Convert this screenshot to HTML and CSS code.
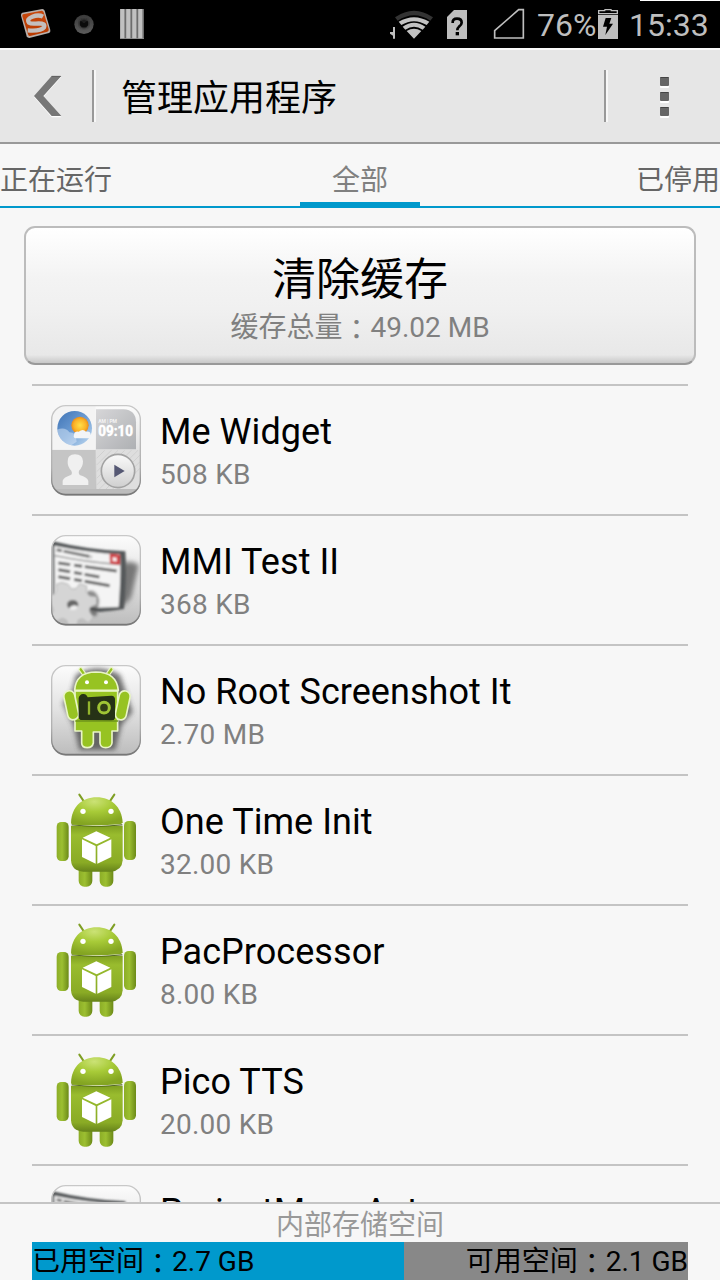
FILE: index.html
```html
<!DOCTYPE html>
<html lang="zh-CN">
<head>
<meta charset="utf-8">
<title>管理应用程序</title>
<link rel="stylesheet" href="styles.css">
</head>
<body>
<svg class="defs" width="0" height="0" aria-hidden="true">
  <defs>
    <linearGradient id="plate" x1="0" y1="0" x2="0" y2="1"><stop offset="0" stop-color="#fcfcfc"/><stop offset=".5" stop-color="#e2e2e2"/><stop offset="1" stop-color="#bdbdbd"/></linearGradient>
    <linearGradient id="edge" x1="0" y1="0" x2="0" y2="1"><stop offset="0" stop-color="#c8c8c8"/><stop offset=".7" stop-color="#b0b0b0"/><stop offset="1" stop-color="#777"/></linearGradient>
    <linearGradient id="limb" x1="0" y1="0" x2="1" y2="0"><stop offset="0" stop-color="#8cad27"/><stop offset=".45" stop-color="#9cbf31"/><stop offset="1" stop-color="#6c8a18"/></linearGradient>
    <linearGradient id="torso" x1="0" y1="0" x2="0" y2="1"><stop offset="0" stop-color="#7f9f20"/><stop offset=".2" stop-color="#99bc2e"/><stop offset=".8" stop-color="#8aab25"/><stop offset="1" stop-color="#66831a"/></linearGradient>
    <radialGradient id="head" cx=".45" cy=".15" r=".8"><stop offset="0" stop-color="#cbe276"/><stop offset=".45" stop-color="#a8cb38"/><stop offset="1" stop-color="#84a522"/></radialGradient>
    <linearGradient id="sky" x1="0" y1="0" x2="1" y2="1"><stop offset="0" stop-color="#3f73b5"/><stop offset=".5" stop-color="#6c9cd3"/><stop offset="1" stop-color="#c3dcf2"/></linearGradient>
    <radialGradient id="sun"><stop offset="0" stop-color="#ffe04a"/><stop offset=".7" stop-color="#fbb328"/><stop offset="1" stop-color="#e98c1c"/></radialGradient>
    <linearGradient id="shine" x1="0" y1="0" x2="1" y2="1"><stop offset="0" stop-color="#d6d6d8"/><stop offset="1" stop-color="#aeb0b3"/></linearGradient>
    <linearGradient id="play" x1="0" y1="0" x2="0" y2="1"><stop offset="0" stop-color="#fafafa"/><stop offset="1" stop-color="#cfcfcf"/></linearGradient>
    <linearGradient id="orange" x1="0" y1="0" x2="0" y2="1"><stop offset="0" stop-color="#c9480c"/><stop offset="1" stop-color="#b83a00"/></linearGradient>
    <linearGradient id="orb" x1="0" y1="0" x2="0" y2="1"><stop offset="0" stop-color="#3a3a3a"/><stop offset="1" stop-color="#5c5c5c"/></linearGradient>
    <filter id="soft1" x="-10%" y="-10%" width="120%" height="120%"><feGaussianBlur stdDeviation="1.5"/></filter>
    <filter id="soft2" x="-10%" y="-10%" width="120%" height="120%"><feGaussianBlur stdDeviation="2.6"/></filter>
    <filter id="soft3" x="-20%" y="-20%" width="140%" height="140%"><feGaussianBlur stdDeviation="4"/></filter>
    <filter id="soft7" x="-30%" y="-30%" width="160%" height="160%"><feGaussianBlur stdDeviation="8"/></filter>
    <clipPath id="tile"><rect x="35" y="31" width="266" height="266" rx="42"/></clipPath>
    <clipPath id="weather"><circle cx="104" cy="100" r="52"/></clipPath>

    <g id="robot">
      <g stroke="#7f9f24" stroke-width="6" stroke-linecap="round"><path d="M118 29l16 24M223 29l-16 24"/></g>
      <rect x="116" y="235" width="41" height="70" rx="17" fill="url(#limb)"/>
      <rect x="179" y="235" width="41" height="70" rx="17" fill="url(#limb)"/>
      <rect x="50" y="111" width="36" height="117" rx="14" fill="url(#limb)"/>
      <rect x="252" y="108" width="36" height="117" rx="14" fill="url(#limb)"/>
      <path d="M93 122H248V226Q246 258 212 260H130Q95 258 93 226Z" fill="url(#torso)"/>
      <path d="M95 118Q170 129 247 118V121Q170 129 95 121Z" fill="#3f5510"/>
      <path d="M93 114C94 66 126 37 170 37S245 66 248 112Q247 117 240 118Q170 123 99 119Q93 118 93 114Z" fill="url(#head)"/>
      <circle cx="129" cy="79" r="8" fill="#fff"/><circle cx="213" cy="79" r="8" fill="#fff"/>
      <path d="M169 139L211 158L170 178L128 158ZM126 163L167 183V236L126 216ZM214 163L172 183V236L214 216Z" fill="#fff"/>
    </g>

    <g id="mmi">
      <rect x="35" y="35" width="266" height="267" rx="42" fill="#888" filter="url(#soft1)"/>
      <rect x="35" y="31" width="266" height="266" rx="42" fill="url(#plate)"/>
      <g clip-path="url(#tile)">
        <path d="M250 112Q285 107 296 122L274 215Q260 245 200 252Z" fill="#777" filter="url(#soft7)"/>
        <g filter="url(#soft2)">
          <path d="M36 48Q140 74 256 79Q261 145 252 252L180 261L40 230Z" fill="#55585a"/>
          <path d="M43 62Q140 82 240 88Q244 140 236 246L170 248L45 225Z" fill="#f4f4f4"/>
          <path d="M45 92Q130 110 239 119" fill="none" stroke="#888" stroke-width="4"/>
          <path d="M50 74L155 96" stroke="#777" stroke-width="9" stroke-dasharray="16 5 80 4"/>
          <path d="M55 114L230 138M55 134L178 156M55 155L209 182" stroke="#666" stroke-width="9" stroke-dasharray="36 12 24 8 100 0"/>
          <path d="M209 86L240 89V120L210 116Z" fill="#cf343b"/>
          <path d="M218 97l12 12M230 98l-12 10" stroke="#fff" stroke-width="5"/>
        </g>
        <path d="M140 200Q168 188 177 226L170 272L132 275Z" fill="#444" opacity=".6" filter="url(#soft3)"/>
        <g filter="url(#soft2)">
          <path d="M84 178L94 192L109 191L119 176L140 183L139 203L149 213L170 216V238L151 246L148 258L160 278L145 294L127 281L115 285L110 310H86L80 286L67 280L45 291L28 276L40 258L37 245L20 235V212L44 207L50 196L47 179L65 172Z" fill="#d5d5d5" stroke="#b4b4b4" stroke-width="3"/>
          <ellipse cx="98" cy="239" rx="17" ry="14" fill="#666"/><path d="M88 249Q99 235 114 245Q107 259 91 254Z" fill="#eee"/>
        </g>
      </g>
      <rect x="35" y="32" width="266" height="266" rx="42" fill="none" stroke="url(#edge)" stroke-width="4"/>
    </g>
  </defs>
</svg>

<div class="screen">
  <div class="status">
    <div class="notices">
      <svg class="status-art" width="160" height="48" viewBox="0 0 480 144">
        <path d="M67 38L127 27Q132 27 134 32L151 90Q152 97 147 99L88 114Q82 114 80 109L63 47Q62 40 67 38Z" fill="#b8b0ac"/>
        <path d="M69 43L125 32Q129 32 131 37L146 88Q147 94 142 95L90 108Q85 109 84 103L67 49Q66 44 69 43Z" fill="url(#orange)"/>
        <path d="M129 50Q116 43 97 50Q79 57 87 68Q94 73 116 70Q137 70 132 82Q123 94 83 91" fill="none" stroke="#c4bfbd" stroke-width="13"/>
        <circle cx="252" cy="73" r="29" fill="url(#orb)"/><circle cx="252" cy="71" r="14" fill="#1c1c1c" filter="url(#soft2)"/><path d="M240 64h6l3 5h6l3-5h6v12l-6 6h-12l-6-6z" fill="#0b0b0b"/>
        <path d="M360 27h72v90h-72z" fill="#858585"/>
        <path d="M361 27h12v88h-12zM379 27h12v88h-12zM397 27h12v88h-12zM415 27h12v88h-12z" fill="#c0c0c0"/>
        <path d="M376 27v87M394 27v87M412 27v87M430 27v87" stroke="#686868" stroke-width="3"/>
      </svg>
    </div>
    <svg class="signals" width="152" height="48" viewBox="0 0 456 144">
      <path d="M45 81v35H39V107L30 101V96H39V81Z" fill="#bebebe"/>
      <path d="M45 52Q102 13 159 52L151 62Q102 29 53 62Z" fill="#333"/>
      <path d="M56 65Q102 38 148 65L140 75Q102 52 64 75ZM68 80Q102 57 136 80L128 89Q102 71 76 89ZM80 93Q102 79 124 93L102 116Z" fill="#c2c2c2"/>
      <path d="M222 30H261V117H201V51Z" fill="#bebebe"/>
      <path d="M218 69Q217 56 231 56Q245 56 245 68Q245 74 237 80Q232 84 232 91" fill="none" stroke="#000" stroke-width="8"/><path d="M227 96h10v10h-10z"/>
      <path d="M344 114V92L416 29H430V114Z" fill="none" stroke="#bebebe" stroke-width="5"/>
    </svg>
    <span class="percent">76%</span>
    <svg class="battery" width="20" height="48" viewBox="0 0 60 144">
      <path d="M0 30H19V27H41V30H60V117H0Z" fill="#bebebe"/><path d="M4 34H22V31H38V34H56V39H4ZM0 43H60V45H0Z" fill="#000"/>
      <path d="M23 54H40L34 71H45L22 105L27 80H15Z" fill="#000"/>
    </svg>
    <span class="clock">15:33</span>
    <i class="corner-line"></i>
  </div>

  <header class="bar">
    <svg class="back" width="92" height="92" viewBox="0 0 276 276">
      <path d="M155 81H184L130 141L184 202H155L102 141Z" fill="#fff"/>
      <path d="M155 78H184L130 138L184 198H155L102 138Z" fill="#777"/><path d="M155 79H182" stroke="#555" stroke-width="2"/>
    </svg>
    <i class="rule"></i>
    <h1 class="title">管理应用程序</h1>
    <i class="rule"></i>
    <div class="menu"><i class="dot"></i><i class="dot"></i><i class="dot"></i></div>
  </header>

  <nav class="tabs">
    <span class="tab">正在运行</span>
    <span class="tab tab-current">全部</span>
    <span class="tab tab-last">已停用</span>
  </nav>

  <main class="content">
    <button class="clear">
      <span class="clear-title">清除缓存</span>
      <span class="clear-total">缓存总量<span class="colon" lang="zh-Hant">：</span>49.02 MB</span>
    </button>

    <ul class="apps">
      <li class="app">
        <svg class="icon" viewBox="0 0 330 330">
          <rect x="35" y="35" width="266" height="267" rx="42" fill="#888" filter="url(#soft1)"/>
          <rect x="35" y="31" width="266" height="266" rx="42" fill="url(#plate)"/>
          <g clip-path="url(#tile)">
            <path d="M35 31H167V164H35Z" fill="#f4f4f4"/>
            <path d="M168 43H250Q288 45 288 82V163H168Z" fill="url(#shine)"/>
            <path d="M35 165H167V285H35Z" fill="#c5c5c5"/>
            <path d="M169 165H301V300H169Z" fill="#dedede"/>
            <path d="M170 190l24-24M170 210l44-44M170 230l64-64M170 250l84-84M170 270l104-104M170 290l124-124M190 290l110-110M210 290l90-90M230 290l70-70" stroke="#d0d0d0" stroke-width="3"/>
            <path d="M35 282H301V300H35Z" fill="#bcbcbc"/>
          </g>
          <circle cx="104" cy="100" r="52" fill="url(#sky)"/>
          <g clip-path="url(#weather)" filter="url(#soft1)"><path d="M50 105Q75 94 88 112Q110 112 110 140L80 160H45Z" fill="#dceafa" opacity=".5"/></g>
          <circle cx="120" cy="91" r="26" fill="url(#sun)" filter="url(#soft1)"/>
          <path d="M102 121Q102 108 116 110Q129 100 138 110Q151 107 152 119Q164 119 160 130H107Q99 128 102 121Z" fill="#f3f5f7" filter="url(#soft1)"/>
          <text class="art-small" x="175" y="84" textLength="56">AM | PM</text>
          <text class="art-clock" x="175" y="123" textLength="104" lengthAdjust="spacingAndGlyphs">09:10</text>
          <path d="M68 270V257Q70 247 94 239Q98 235 94 227Q82 216 83 199Q82 179 105 178Q128 178 129 199Q129 216 117 227Q114 236 119 240Q143 247 145 258V270Z" fill="#f0f0f0" filter="url(#soft1)"/>
          <circle cx="234" cy="228" r="50" fill="url(#play)" stroke="#a3a3a3" stroke-width="5"/>
          <path d="M223 209L254 228L223 247Z" fill="#555873"/>
          <rect x="35" y="32" width="266" height="266" rx="42" fill="none" stroke="url(#edge)" stroke-width="4"/>
        </svg>
        <div class="info"><span class="name">Me Widget</span><span class="size">508 KB</span></div>
      </li>
      <li class="app">
        <svg class="icon" viewBox="0 0 330 330"><use href="#mmi"/></svg>
        <div class="info"><span class="name">MMI Test II</span><span class="size">368 KB</span></div>
      </li>
      <li class="app">
        <svg class="icon" viewBox="0 0 330 330">
          <rect x="35" y="35" width="266" height="267" rx="42" fill="#888" filter="url(#soft1)"/>
          <rect x="35" y="31" width="266" height="266" rx="42" fill="url(#plate)"/>
          <path d="M108 60Q170 20 240 60L278 170L245 210L225 285H118L100 210L68 145L95 110Z" fill="#444" opacity=".75" filter="url(#soft7)"/>
          <g fill="#97c321" stroke="#e9f5c6" stroke-width="5" stroke-linejoin="round" filter="url(#soft1)">
            <path d="M122 43L134 60M214 43L202 60" stroke-width="14" stroke-linecap="round"/>
            <path d="M122 43L134 60M214 43L202 60" stroke="#97c321" stroke-width="7" stroke-linecap="round"/>
            <path d="M105 108H233V228H216V264Q214 278 197 278Q181 278 180 264V231H160V264Q157 278 142 278Q125 278 125 264V228H105Z"/>
            <path d="M104 106Q107 52 168 51Q230 52 235 106Z"/>
            <rect x="77" y="107" width="33" height="88" rx="16" transform="rotate(-12 93 150)"/>
            <rect x="232" y="107" width="33" height="88" rx="16" transform="rotate(12 248 150)"/>
          </g>
          <circle cx="141" cy="82" r="6" fill="#fff"/><circle cx="198" cy="82" r="6" fill="#fff"/>
          <g filter="url(#soft1)">
            <path d="M116 129Q119 118 129 117Q139 116 143 127L215 122Q224 123 225 132V190Q223 197 214 197L122 195Q116 193 116 185Z" fill="#263013"/>
            <path d="M147 139V179" stroke="#93b52d" stroke-width="7"/><circle cx="192" cy="158" r="16" fill="#323e18" stroke="#a0c435" stroke-width="9"/>
            <path d="M106 198H234" stroke="#6f941c" stroke-width="5"/>
          </g>
          <rect x="35" y="32" width="266" height="266" rx="42" fill="none" stroke="url(#edge)" stroke-width="4"/>
        </svg>
        <div class="info"><span class="name">No Root Screenshot It</span><span class="size">2.70 MB</span></div>
      </li>
      <li class="app">
        <svg class="icon" viewBox="0 0 330 330"><use href="#robot"/></svg>
        <div class="info"><span class="name">One Time Init</span><span class="size">32.00 KB</span></div>
      </li>
      <li class="app">
        <svg class="icon" viewBox="0 0 330 330"><use href="#robot"/></svg>
        <div class="info"><span class="name">PacProcessor</span><span class="size">8.00 KB</span></div>
      </li>
      <li class="app">
        <svg class="icon" viewBox="0 0 330 330"><use href="#robot"/></svg>
        <div class="info"><span class="name">Pico TTS</span><span class="size">20.00 KB</span></div>
      </li>
      <li class="app">
        <svg class="icon" viewBox="0 0 330 330"><use href="#mmi"/></svg>
        <div class="info"><span class="name">ProjectMenuAct</span></div>
      </li>
    </ul>
  </main>

  <footer class="storage">
    <div class="storage-title">内部存储空间</div>
    <div class="meter">
      <div class="used">已用空间<span class="colon" lang="zh-Hant">：</span>2.7 GB</div>
      <div class="free">可用空间<span class="colon" lang="zh-Hant">：</span>2.1 GB</div>
    </div>
  </footer>
</div>
</body>
</html>
```
FILE: styles.css
```css
* { box-sizing: border-box; }

body {
  margin: 0;
  background: #f7f7f7;
  color: #000;
  font-family: Roboto, "Noto Sans CJK SC", sans-serif;
}

.defs { position: absolute; }

.screen {
  display: flex;
  flex-direction: column;
  width: 720px;
  height: 1280px;
  overflow: hidden;
}

.colon {
  font-family: "Noto Sans CJK TC", sans-serif;
  line-height: 20px;
  vertical-align: -3px;
}

/* Status bar */
.status {
  position: relative;
  display: flex;
  flex: none;
  height: 48px;
  background: #000;
  color: #bebebe;
  font-size: 32px;
  line-height: 50px;
}
.status svg { display: block; }
.notices { width: 380px; }
.percent { width: 66px; padding-left: 5px; white-space: nowrap; }
.battery { flex: none; }
.clock { padding-left: 11px; }
.corner-line {
  position: absolute;
  top: 0;
  right: 0;
  width: 80px;
  height: 1px;
  background: #fff;
}

/* Action bar */
.bar {
  display: flex;
  flex: none;
  align-items: center;
  height: 96px;
  border-top: 2px solid #fafafa;
  border-bottom: 2px solid #999;
  background: #e6e6e6;
}
.back { display: block; flex: none; }
.rule {
  width: 4px;
  height: 52px;
  border-left: 2px solid #999;
  border-right: 2px solid #f7f7f7;
}
.title {
  flex: 1;
  margin: 0;
  padding: 6px 0 0 25px;
  font-size: 36px;
  font-weight: 400;
  line-height: 52px;
}
.menu {
  display: flex;
  flex-direction: column;
  align-items: center;
  gap: 6px;
  width: 112px;
}
.dot {
  width: 9px;
  height: 9px;
  border-top: 1px solid #444;
  border-radius: 1px;
  background: #666;
  box-shadow: 0 2px #fff;
}

/* Tabs */
.tabs {
  display: flex;
  flex: none;
  justify-content: space-between;
  height: 64px;
  border-bottom: 2px solid #0099cc;
  color: #666;
  font-size: 28px;
  line-height: 73px;
}
.tab { width: 300px; height: 62px; }
.tab-current {
  width: 120px;
  border-bottom: 4px solid #0099cc;
  color: #808080;
  text-align: center;
}
.tab-last { text-align: right; }

/* App list */
.content {
  flex: 1;
  min-height: 0;
  padding-top: 18px;
  overflow: hidden;
}
.clear {
  display: flex;
  flex-direction: column;
  align-items: center;
  width: 672px;
  height: 139px;
  margin: 0 24px 19px;
  padding: 21px 0 0;
  border: 2px solid #bcbcbc;
  border-bottom-color: #999;
  border-radius: 11px;
  background: linear-gradient(#fff, #f3f3f3 38%, #f0f0f0 60%, #e8e8e8 94%, #c8c8c8);
  color: #000;
  font-family: inherit;
}
.clear-title { font-size: 44px; line-height: 62px; }
.clear-total {
  color: #808080;
  font-size: 28px;
  line-height: 34px;
}

.apps {
  margin: 0 32px;
  padding: 0;
  list-style: none;
}
.app {
  display: flex;
  height: 130px;
  padding: 9px 0 0 8px;
  border-top: 2px solid #c4c4c4;
}
.icon { display: block; flex: none; width: 110px; height: 110px; }
.info {
  display: flex;
  flex-direction: column;
  padding: 16px 0 0 10px;
}
.name {
  font-size: 36px;
  line-height: 42px;
  letter-spacing: 0.05px;
  white-space: nowrap;
}
.size {
  margin-top: 5px;
  color: #808080;
  font-size: 28px;
  line-height: 33px;
  letter-spacing: 0.25px;
}

.art-small { fill: #f4f4f4; font: 700 15px Roboto, sans-serif; }
.art-clock {
  fill: #fff;
  stroke: #fff;
  stroke-width: 1.5px;
  font: 700 43px Roboto, sans-serif;
}

/* Storage footer */
.storage {
  flex: none;
  height: 78px;
  border-top: 2px solid #c4c4c4;
  background: #f7f7f7;
}
.storage-title {
  height: 38px;
  color: #999;
  font-size: 28px;
  line-height: 43px;
  text-align: center;
}
.meter {
  display: flex;
  height: 38px;
  margin: 0 32px;
  font-size: 28px;
  line-height: 40px;
  white-space: nowrap;
}
.used { width: 372px; background: #0099cc; }
.free { flex: 1; background: #888; text-align: right; }
```
